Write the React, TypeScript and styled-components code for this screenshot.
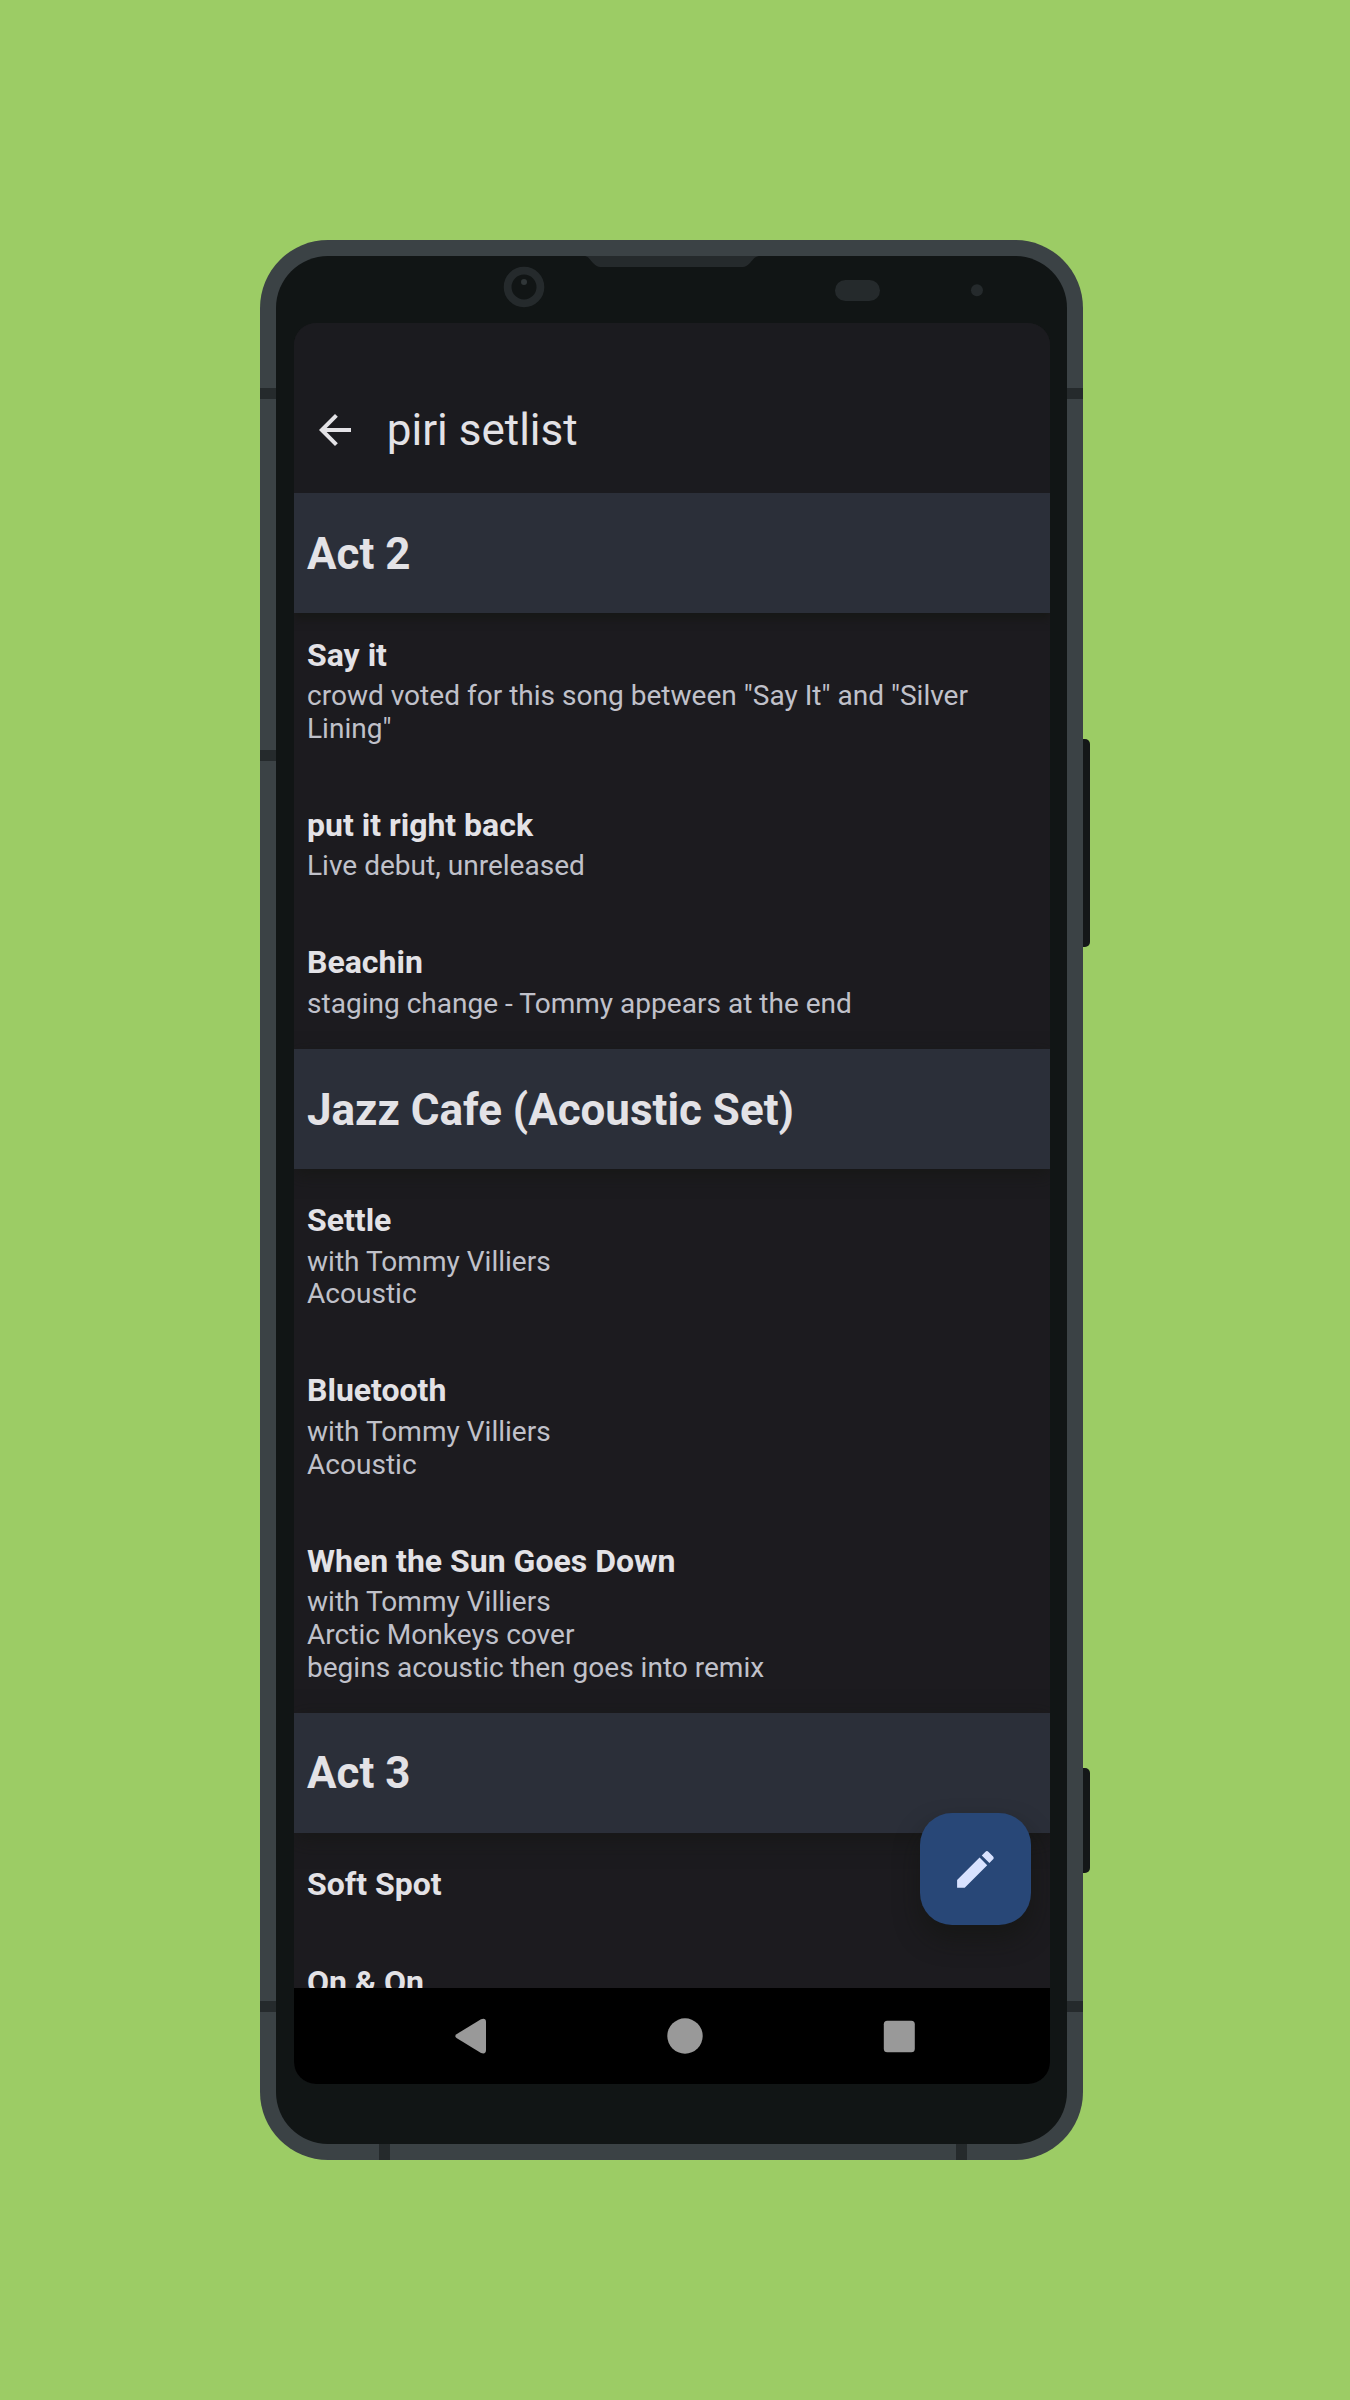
import React from "react";
import styled, { createGlobalStyle } from "styled-components";

const GlobalStyle = createGlobalStyle`
  * { box-sizing: border-box; }
  body { margin: 0; background: #9ccc65; }
`;

const Page = styled.main`
  width: 1350px;
  height: 2400px;
  padding: 240px 0 0 260px;
  overflow: hidden;
  background: #9ccc65;
  font-family: Roboto, "Liberation Sans", sans-serif;
`;

const Phone = styled.div`
  position: relative;
  width: 823.3px;
  height: 1920px;
  padding: 16px;
  border-radius: 68px;
  background: #3b4245;
`;

const SideButton = styled.span<{ $top: number; $length: number }>`
  position: absolute;
  left: 100%;
  top: ${(p) => p.$top}px;
  width: 6.7px;
  height: ${(p) => p.$length}px;
  border-radius: 0 5px 5px 0;
  background: #141718;
`;

const SideBand = styled.span<{ $edge: "left" | "right"; $top: number }>`
  position: absolute;
  ${(p) => p.$edge}: 0;
  top: ${(p) => p.$top}px;
  width: 16px;
  height: 11px;
  background: #252a2c;
`;

const BottomBand = styled.span<{ $left: number }>`
  position: absolute;
  bottom: 0;
  left: ${(p) => p.$left}px;
  width: 11px;
  height: 16px;
  background: #252a2c;
`;

const Bezel = styled.div`
  display: flex;
  flex-direction: column;
  height: 1888px;
  padding: 0 17.3px 0 17px;
  border-radius: 52px;
  background: #111515;
`;

const Sensors = styled.svg`
  display: block;
  flex: none;
  width: 757px;
  height: 66.6px;
`;

const Screen = styled.div`
  position: relative;
  display: flex;
  flex-direction: column;
  height: 1761.4px;
  margin-left: 0.6px;
  overflow: hidden;
  border-radius: 22px;
  background: #1c1b1f;
`;

const AppBar = styled.header`
  display: flex;
  align-items: center;
  flex: none;
  gap: 27.8px;
  height: 170.6px;
  padding: 44px 0 0 17.4px;
  background: #1b1b1f;
`;

const BackIcon = styled.svg`
  width: 48px;
  height: 48px;
  fill: #e3e2e6;
`;

const Title = styled.h1`
  margin: 0;
  color: #e3e2e6;
  font-size: 44px;
  font-weight: 400;
  line-height: 52px;
`;

const SetList = styled.div`
  flex: 1;
  min-height: 0;
  overflow: hidden;
`;

const ActHeader = styled.h2<{ $depth: number }>`
  position: relative;
  z-index: 1;
  display: flex;
  align-items: center;
  height: 120px;
  margin: 0;
  padding: 1px 0 0 13.4px;
  background: #2b2f39;
  box-shadow: 0 6px ${(p) => p.$depth}px rgba(20, 22, 16, 0.6);
  color: #e3e2e6;
  font-size: 43.95px;
  font-weight: 700;
  line-height: 52px;
`;

const Songs = styled.ul<{ $scrolled: number }>`
  margin: ${(p) => -p.$scrolled}px 0 0;
  padding: 0;
  list-style: none;
`;

const Song = styled.li`
  display: flex;
  flex-direction: column;
  gap: 6.1px;
  padding: 32.8px 40px 28.6px 13.4px;
`;

const SongName = styled.strong`
  color: #e3e2e6;
  font-size: 32px;
  font-weight: 700;
  line-height: 37.4px;
`;

const Note = styled.span`
  color: #c0c1ca;
  font-size: 28.05px;
  line-height: 32.7px;
  white-space: pre-line;
`;

const Fab = styled.button`
  position: absolute;
  right: 18.9px;
  bottom: 159.2px;
  z-index: 2;
  display: grid;
  place-items: center;
  width: 111.6px;
  height: 111.6px;
  padding: 0;
  border: 0;
  border-radius: 32px;
  background: #284777;
  box-shadow: 0 14px 24px rgba(18, 20, 14, 0.5);
`;

const EditIcon = styled.svg`
  width: 48.8px;
  height: 48.8px;
  fill: #d8e2ff;
`;

const NavBar = styled.nav`
  display: flex;
  align-items: center;
  flex: none;
  height: 95.8px;
  padding: 0 135.4px 0 161px;
  justify-content: space-between;
  background: #000;
`;

const NavIcon = styled.svg`
  width: 36px;
  height: 36px;
  fill: #999;
`;

interface SongData {
  name: string;
  note?: string;
}

interface ActData {
  name: string;
  scrolled: number;
  depth: number;
  songs: SongData[];
}

const acts: ActData[] = [
  {
    name: "Act 2",
    scrolled: 9.4,
    depth: 8,
    songs: [
      { name: "Say it", note: 'crowd voted for this song between "Say It" and "Silver Lining"' },
      { name: "put it right back", note: "Live debut, unreleased" },
      { name: "Beachin", note: "staging change - Tommy appears at the end" },
    ],
  },
  {
    name: "Jazz Cafe (Acoustic Set)",
    scrolled: 0,
    depth: 16,
    songs: [
      { name: "Settle", note: "with Tommy Villiers\nAcoustic" },
      { name: "Bluetooth", note: "with Tommy Villiers\nAcoustic" },
      {
        name: "When the Sun Goes Down",
        note: "with Tommy Villiers\nArctic Monkeys cover\nbegins acoustic then goes into remix",
      },
    ],
  },
  {
    name: "Act 3",
    scrolled: 0,
    depth: 20,
    songs: [{ name: "Soft Spot" }, { name: "On & On" }],
  },
];

export default function App() {
  return (
    <>
      <GlobalStyle />
      <Page>
        <Phone>
          <SideButton $top={499} $length={208} />
          <SideButton $top={1528.3} $length={105} />
          <SideBand $edge="left" $top={148} />
          <SideBand $edge="right" $top={148} />
          <SideBand $edge="left" $top={510} />
          <SideBand $edge="left" $top={1761} />
          <SideBand $edge="right" $top={1761} />
          <BottomBand $left={119} />
          <BottomBand $left={696} />
          <Bezel>
            <Sensors viewBox="293 256 757 66.6">
              <path
                d="M585 256C589 257 590 260 593 263Q597 267 600 267H743Q746 267 750 263C753 260 754 257 759 256Z"
                fill="#252a2c"
              />
              <circle cx="524" cy="287" r="16.4" fill="none" stroke="#252a2c" strokeWidth="7.8" />
              <circle cx="524" cy="282" r="3" fill="#303638" />
              <rect x="835" y="280" width="45" height="21" rx="10.5" fill="#252a2c" />
              <circle cx="977" cy="290.3" r="6" fill="#252a2c" />
            </Sensors>
            <Screen>
              <AppBar>
                <BackIcon viewBox="0 0 24 24">
                  <path d="M20 11H7.83l5.59-5.59L12 4l-8 8 8 8 1.41-1.41L7.83 13H20v-2z" />
                </BackIcon>
                <Title>piri setlist</Title>
              </AppBar>
              <SetList>
                {acts.map((act) => (
                  <section key={act.name}>
                    <ActHeader $depth={act.depth}>{act.name}</ActHeader>
                    <Songs $scrolled={act.scrolled}>
                      {act.songs.map((song) => (
                        <Song key={song.name}>
                          <SongName>{song.name}</SongName>
                          {song.note && <Note>{song.note}</Note>}
                        </Song>
                      ))}
                    </Songs>
                  </section>
                ))}
              </SetList>
              <Fab aria-label="Edit">
                <EditIcon viewBox="0 0 24 24">
                  <path d="M3 17.25V21h3.75L17.81 9.94l-3.75-3.75L3 17.25zM20.71 7.04c.39-.39.39-1.02 0-1.41l-2.34-2.34c-.39-.39-1.02-.39-1.41 0l-1.83 1.83 3.75 3.75 1.83-1.83z" />
                </EditIcon>
              </Fab>
              <NavBar>
                <NavIcon viewBox="0 0 36 36">
                  <path d="M1.5 16.2 26 1.2Q31 -0.5 31 4V32Q31 36.5 26 35L1.5 20Q-1 18 1.5 16.2Z" />
                </NavIcon>
                <NavIcon viewBox="0 0 36 36">
                  <circle cx="18" cy="18" r="17.7" />
                </NavIcon>
                <NavIcon viewBox="0 0 36 36">
                  <rect x="4.8" y="2.8" width="31" height="31.5" rx="3.5" />
                </NavIcon>
              </NavBar>
            </Screen>
          </Bezel>
        </Phone>
      </Page>
    </>
  );
}
